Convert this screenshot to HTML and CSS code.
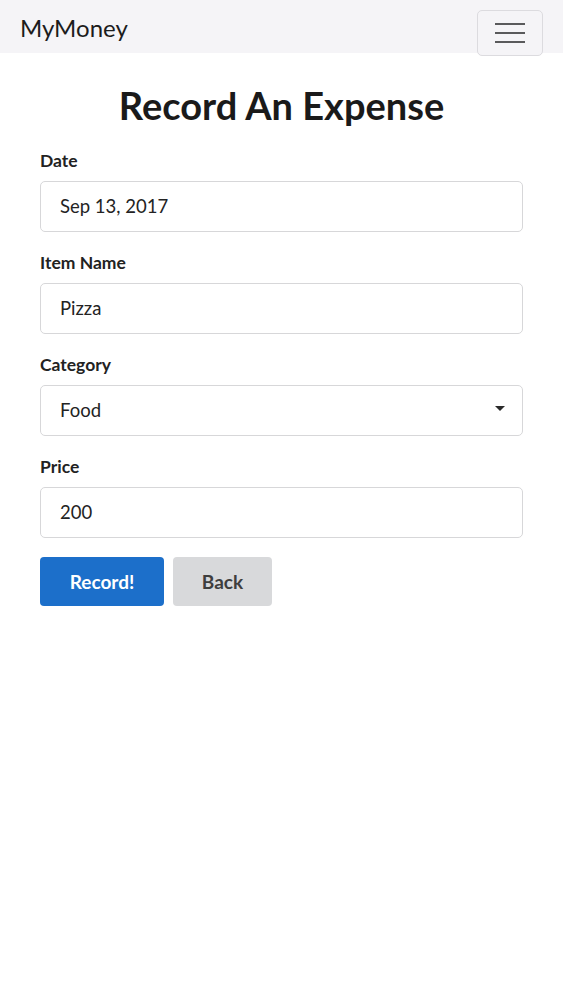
FILE: index.html
```html
<!DOCTYPE html>
<html lang="en">
<head>
<meta charset="utf-8">
<title>MyMoney - Record An Expense</title>
<link rel="stylesheet" href="styles.css">
</head>
<body>
<nav class="navbar">
  <a class="brand" href="#">MyMoney</a>
  <button class="toggler" type="button" aria-label="Toggle navigation">
    <span class="bar"></span><span class="bar"></span><span class="bar"></span>
  </button>
</nav>
<main class="container">
  <h1 class="title">Record An Expense</h1>
  <form class="form">
    <div class="group">
      <label class="label" for="date">Date</label>
      <input class="control" id="date" type="text" value="Sep 13, 2017">
    </div>
    <div class="group">
      <label class="label" for="item">Item Name</label>
      <input class="control" id="item" type="text" value="Pizza">
    </div>
    <div class="group">
      <label class="label" for="cat">Category</label>
      <div class="select-wrap">
        <select class="control select" id="cat">
          <option>Food</option>
          <option>Transport</option>
          <option>Other</option>
        </select>
      </div>
    </div>
    <div class="group">
      <label class="label" for="price">Price</label>
      <input class="control" id="price" type="text" value="200">
    </div>
    <div class="actions">
      <button class="btn btn-primary" type="button">Record!</button>
      <button class="btn btn-secondary" type="button">Back</button>
    </div>
  </form>
</main>
</body>
</html>
```
FILE: styles.css
```css
* { box-sizing: border-box; }
body {
  margin: 0;
  font-family: Lato, "Open Sans", "Liberation Sans", sans-serif;
  color: #212121;
  background: #fff;
}
.navbar {
  height: 53px;
  background: #f5f4f7;
  display: flex;
  align-items: flex-start;
  justify-content: space-between;
  padding: 0 20px;
}
.brand {
  font-size: 24px;
  line-height: 1;
  color: #1c1c1c;
  text-decoration: none;
  margin-top: 16px;
}
.toggler {
  margin-top: 10px;
  width: 66px;
  height: 46px;
  border: 1px solid #dcdbdf;
  border-radius: 5px;
  background: #f5f4f7;
  display: flex;
  flex-direction: column;
  align-items: center;
  justify-content: center;
  gap: 7px;
  padding: 0;
}
.bar {
  display: block;
  width: 30px;
  height: 2px;
  background: #5a5a5c;
}
.container {
  padding: 0 40px;
}
.title {
  margin: 30px 0 20px;
  font-size: 38px;
  line-height: 1.2;
  font-weight: 700;
  text-align: center;
  color: #1a1a1a;
}
.group {
  margin-bottom: 19px;
}
.label {
  display: block;
  font-size: 17.5px;
  font-weight: 700;
  line-height: 24px;
  margin-bottom: 8px;
  color: #222;
}
.control {
  display: block;
  width: 100%;
  height: 51px;
  padding: 0 19px;
  border: 1px solid #d7d7d9;
  border-radius: 5px;
  font-family: inherit;
  font-size: 18.5px;
  color: #232323;
  background: #fff;
  outline: none;
}
.select-wrap {
  position: relative;
}
.select {
  appearance: none;
  -webkit-appearance: none;
}
.select-wrap::after {
  content: "";
  position: absolute;
  right: 18px;
  top: 21px;
  border-left: 5px solid transparent;
  border-right: 5px solid transparent;
  border-top: 5px solid #2a2a2a;
  pointer-events: none;
}
.actions {
  display: flex;
  gap: 9px;
}
.btn {
  height: 49px;
  border: none;
  border-radius: 4px;
  font-family: inherit;
  font-size: 19px;
  font-weight: 700;
  padding: 0;
}
.btn-primary {
  width: 124px;
  background: #1c6fca;
  color: #fff;
}
.btn-secondary {
  width: 99px;
  background: #d8d9db;
  color: #3e3e3e;
}
```
